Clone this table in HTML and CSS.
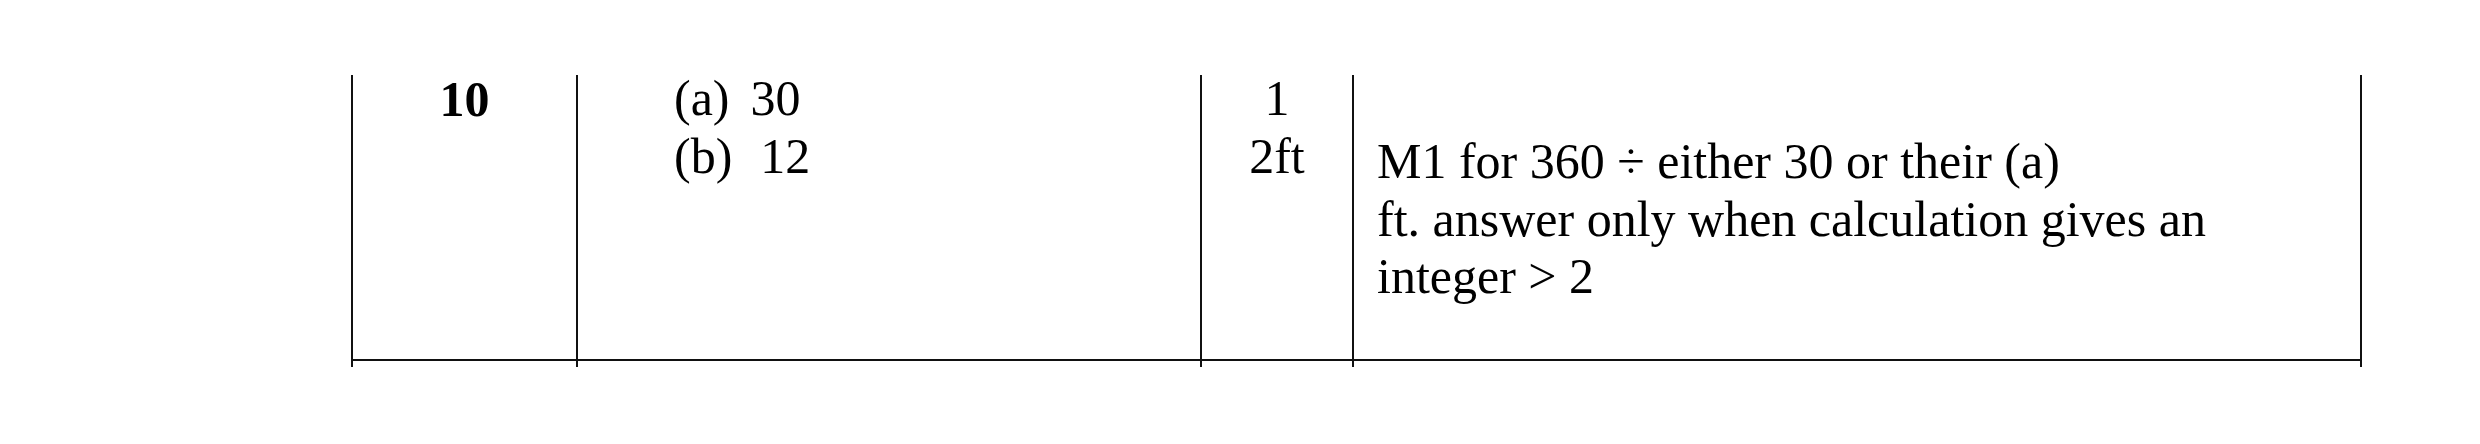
FILE: index.html
```html
<!DOCTYPE html>
<html lang="en">
<head>
<meta charset="utf-8">
<title>Mark scheme – Question 10</title>
<link rel="stylesheet" href="styles.css">
</head>
<body>
<div class="table">
  <div class="row main">
    <div class="cell col-q"><div class="content">10</div></div>
    <div class="cell col-ans">
      <div class="content">
        <div><span class="part">(a)</span>30</div>
        <div><span class="part part-b">(b)</span>12</div>
      </div>
    </div>
    <div class="cell col-mark">
      <div class="content">
        <div>1</div>
        <div>2ft</div>
      </div>
    </div>
    <div class="cell col-note">
      <div class="content">M1 for 360 ÷ either 30 or their (a)<br>ft. answer only when calculation gives an<br>integer &gt; 2</div>
    </div>
  </div>
  <div class="row stub">
    <div class="cell"></div>
    <div class="cell"></div>
    <div class="cell"></div>
    <div class="cell"></div>
  </div>
</div>
</body>
</html>
```

FILE: styles.css
```css
* {
  box-sizing: border-box;
}

body {
  margin: 0;
  background: #ffffff;
  color: #000000;
  font-family: "Liberation Serif", "Times New Roman", serif;
  font-size: 50px;
  line-height: 57.5px;
}

.table {
  margin: 75px 0 0 351px;
  width: 2011px;
}

.row {
  display: grid;
  grid-template-columns: 225px 624px 152px 1010px;
}

.row.main {
  height: 286px;
  border-bottom: 2px solid #111111;
}

.row.stub {
  height: 6px;
}

.cell {
  border-left: 2px solid #111111;
}

.cell:last-child {
  border-right: 2px solid #111111;
}

.content {
  margin-top: -5px;
}

.col-q {
  text-align: center;
  font-weight: bold;
}

.col-q .content {
  margin-top: -4px;
}

.col-ans {
  padding-left: 96px;
}

.part {
  margin-right: 21px;
}

.part-b {
  margin-right: 28px;
}

.col-mark {
  text-align: center;
}

.col-note {
  padding-left: 23px;
  white-space: nowrap;
}

.col-note .content {
  margin-top: 58px;
}
```
